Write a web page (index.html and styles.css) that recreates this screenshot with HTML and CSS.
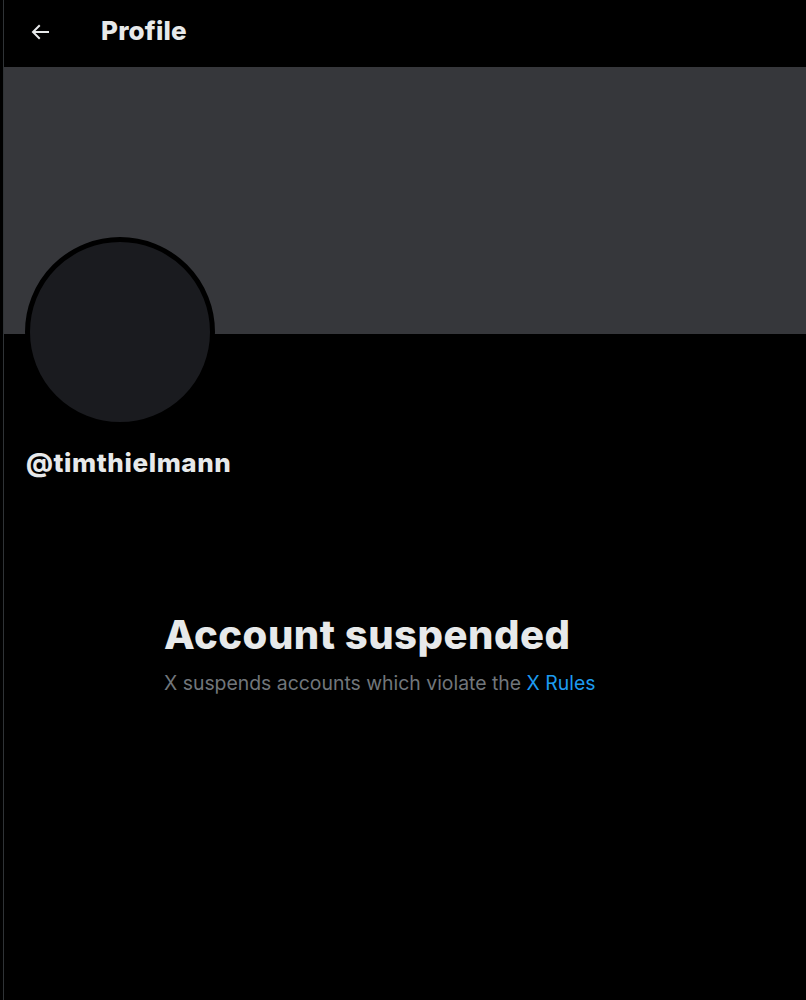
FILE: index.html
```html
<!DOCTYPE html>
<html>

<head>
    <title>Profile</title>
    <link rel="stylesheet" href="styles.css">
</head>

<body>
    <div class="page">
        <div class="top-bar">
            <button class="back">
                <svg viewBox="0 0 24 24" width="24" height="24">
                    <path d="M7.414 13l5.043 5.04-1.414 1.42L3.586 12l7.457-7.46 1.414 1.42L7.414 11H21v2H7.414z" fill="#e7e9ea"></path>
                </svg>
            </button>
            <h2>Profile</h2>
        </div>

        <div class="banner"></div>

        <div class="avatar"></div>

        <div class="handle">@timthielmann</div>

        <div class="suspended">
            <h1>Account suspended</h1>
            <p>X suspends accounts which violate the <a href="#">X Rules</a></p>
        </div>
    </div>
</body>

</html>
```

FILE: styles.css
```css
body {
    margin: 0;
    background-color: black;
    font-family: Inter, "Noto Sans", sans-serif;
    color: #e7e9ea;
}

.page {
    margin-left: 3px;
    border-left: 1px solid #2f3336;
    min-height: 1000px;
}

.top-bar {
    height: 67px;
    display: flex;
    align-items: center;
}

.back {
    background: none;
    border: none;
    padding: 0;
    margin: 0 0 4px 24px;
    width: 24px;
    height: 24px;
    display: flex;
}

.top-bar h2 {
    margin: 0 0 6px 49px;
    font-size: 26px;
    font-weight: 800;
    letter-spacing: 0.2px;
}

.banner {
    height: 267px;
    background-color: #36373b;
}

.avatar {
    width: 180px;
    height: 180px;
    border: 5px solid black;
    border-radius: 50%;
    background-color: #1a1b1f;
    margin: -97px 0 0 21px;
}

.handle {
    margin: 20px 0 0 22px;
    font-size: 26px;
    font-weight: 800;
    letter-spacing: 0.6px;
}

.suspended {
    margin: 132px 0 0 160px;
}

.suspended h1 {
    margin: 0;
    font-size: 40px;
    font-weight: 800;
    letter-spacing: 0.5px;
}

.suspended p {
    margin: 12px 0 0;
    font-size: 19.4px;
    color: #71767b;
}

.suspended a {
    color: #1d9bf0;
    text-decoration: none;
}
```
